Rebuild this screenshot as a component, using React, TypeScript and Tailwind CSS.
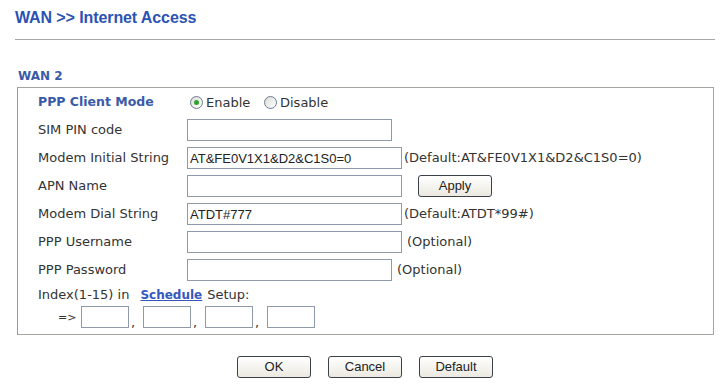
import React from "react";

const label = "text-[13px] text-[#333] font-['DejaVu_Sans',Verdana,sans-serif]";
const inputCls =
  "h-[22px] border border-[#8e9aa8] bg-white px-[2px] text-[13px] text-[#222] font-['Liberation_Sans',Arial,sans-serif] outline-none";
const btnCls =
  "h-[22px] rounded-[3px] border border-[#3a4148] bg-gradient-to-b from-white to-[#ebe9e0] text-[13px] text-[#222] font-['Liberation_Sans',Arial,sans-serif]";

function Radio({ checked }: { checked?: boolean }) {
  return (
    <span className="inline-flex h-[13px] w-[13px] shrink-0 items-center justify-center rounded-full border border-[#6b7d91] bg-gradient-to-br from-[#dcdcd6] to-white">
      {checked && <span className="h-[5px] w-[5px] rounded-full bg-[#2fa12f]" />}
    </span>
  );
}

function Row({
  name,
  value = "",
  w,
  children,
}: {
  name: string;
  value?: string;
  w: number;
  children?: React.ReactNode;
}) {
  return (
    <div className="flex h-[28px] items-center">
      <div className={`w-[149px] shrink-0 ${label}`}>{name}</div>
      <input
        readOnly
        value={value}
        className={`${inputCls} ${w === 205 ? "w-[205px]" : "w-[215px]"}`}
      />
      {children}
    </div>
  );
}

export default function App() {
  return (
    <div className="min-h-screen bg-white">
      <div className="pl-[15px] pt-[8px]">
        <h1 className="text-[16px] font-bold leading-[20px] tracking-[-0.1px] text-[#2c52b4] font-['Liberation_Sans',Arial,sans-serif]">
          WAN &gt;&gt; Internet Access
        </h1>
        <div className="mt-[11px] h-px w-[700px] bg-[#a8a8a4]" />
        <div className="mt-[29px] pl-[3px] text-[12px] font-bold leading-[14px] text-[#3a5aa8] font-['DejaVu_Sans',Verdana,sans-serif]">
          WAN 2
        </div>
      </div>

      <div className="ml-[17px] mt-[4px] w-[697px] border border-[#a6a6a0] border-l-[#9a9a94] pl-[20px] pt-px">
        <div className="flex h-[27px] items-center">
          <div className="w-[152px] shrink-0 text-[12.5px] font-bold text-[#3a5aa8] font-['DejaVu_Sans',Verdana,sans-serif]">
            PPP Client Mode
          </div>
          <label className={`flex w-[74px] items-center gap-[3px] ${label}`}>
            <Radio checked />
            Enable
          </label>
          <label className={`flex items-center gap-[3px] ${label}`}>
            <Radio />
            Disable
          </label>
        </div>
        <Row name="SIM PIN code" w={205} />
        <Row name="Modem Initial String" value="AT&FE0V1X1&D2&C1S0=0" w={215}>
          <span className={`ml-[2px] ${label}`}>(Default:AT&amp;FE0V1X1&amp;D2&amp;C1S0=0)</span>
        </Row>
        <Row name="APN Name" w={215}>
          <button className={`ml-[16px] w-[74px] ${btnCls}`}>Apply</button>
        </Row>
        <Row name="Modem Dial String" value="ATDT#777" w={215}>
          <span className={`ml-[2px] ${label}`}>(Default:ATDT*99#)</span>
        </Row>
        <Row name="PPP Username" w={215}>
          <span className={`ml-[5px] ${label}`}>(Optional)</span>
        </Row>
        <Row name="PPP Password" w={205}>
          <span className={`ml-[5px] ${label}`}>(Optional)</span>
        </Row>
        <div className={`flex h-[22px] items-center ${label}`}>
          Index(1-15) in
          <a className="ml-[11px] mr-[5px] text-[12px] font-bold text-[#3558bd] underline">Schedule</a>
          Setup:
        </div>
        <div className={`flex h-[26px] items-start pl-[20px] ${label}`}>
          <span className="mt-[4px] w-[23px] shrink-0 text-[11px]">=&gt;</span>
          {[0, 1, 2, 3].map((i) => (
            <React.Fragment key={i}>
              <input readOnly value="" className={`${inputCls} w-[48px]`} />
              {i < 3 && <span className="mt-[7px] w-[14px] shrink-0 pl-[2px]">,</span>}
            </React.Fragment>
          ))}
        </div>
        <div className="h-[2px]" />
      </div>

      <div className="ml-[237px] mt-[21px] flex gap-[17px]">
        <button className={`w-[74px] ${btnCls}`}>OK</button>
        <button className={`w-[74px] ${btnCls}`}>Cancel</button>
        <button className={`w-[74px] ${btnCls}`}>Default</button>
      </div>
    </div>
  );
}
